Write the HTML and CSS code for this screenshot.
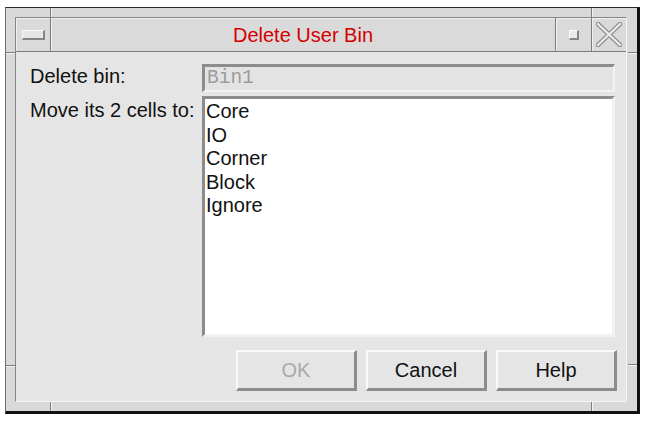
FILE: index.html
```html
<!DOCTYPE html>
<html>
<head>
<meta charset="utf-8">
<link rel="stylesheet" href="styles.css">
</head>
<body>
<div class="win">
  <span class="notch v" style="left:44px;top:0"></span>
  <span class="notch v" style="left:585px;top:0"></span>
  <span class="notch v" style="left:44px;bottom:0"></span>
  <span class="notch v" style="left:585px;bottom:0"></span>
  <span class="notch h" style="left:0;top:44px"></span>
  <span class="notch h" style="right:0;top:44px"></span>
  <span class="notch h" style="left:0;top:357px"></span>
  <span class="notch h" style="right:0;top:356px"></span>
  <div class="inner">
    <div class="titlebar">
      <div class="tb-cell tb-menu"><span class="menu-bar"></span></div>
      <div class="tb-cell tb-title">Delete User Bin</div>
      <div class="tb-cell tb-small"><span class="sq"></span></div>
      <div class="tb-cell tb-close">
        <svg width="26" height="25" viewBox="0 0 26 25">
          <g stroke-linecap="square">
            <line x1="2" y1="2" x2="24" y2="23" stroke="#8c8c8c" stroke-width="4.5"/>
            <line x1="24" y1="2" x2="2" y2="23" stroke="#8c8c8c" stroke-width="4.5"/>
            <line x1="2" y1="2" x2="24" y2="23" stroke="#ececec" stroke-width="2.2"/>
            <line x1="24" y1="2" x2="2" y2="23" stroke="#ececec" stroke-width="2.2"/>
          </g>
        </svg>
      </div>
    </div>
    <div class="content">
      <div class="form">
        <div class="label first">Delete bin:</div>
        <div class="field">Bin1</div>
        <div class="label">Move its 2 cells to:</div>
        <div class="list">
          <div class="item">Core</div>
          <div class="item">IO</div>
          <div class="item">Corner</div>
          <div class="item">Block</div>
          <div class="item">Ignore</div>
        </div>
      </div>
      <div class="buttons">
        <div class="btn disabled">OK</div>
        <div class="btn">Cancel</div>
        <div class="btn">Help</div>
      </div>
    </div>
  </div>
</div>
</body>
</html>
```
FILE: styles.css
```css
html, body {
  margin: 0;
  padding: 0;
  background: #ffffff;
}
body {
  padding: 7px 0 0 5px;
  font-family: "Liberation Sans", Arial, sans-serif;
}
.win {
  position: relative;
  box-sizing: border-box;
  width: 635px;
  height: 407px;
  border-top: 1px solid #2a2a2a;
  border-left: 1px solid #6e6e6e;
  border-right: 3px solid #111111;
  border-bottom: 3px solid #111111;
  background: #d9d9d9;
  padding: 9px 10px 9px 9px;
  display: flex;
}
.notch {
  position: absolute;
  background: #7c7c7c;
}
.notch.v {
  width: 1px;
  height: 9px;
  box-shadow: 1px 0 0 #f4f4f4;
}
.notch.h {
  height: 1px;
  width: 9px;
  box-shadow: 0 1px 0 #f4f4f4;
}
.inner {
  flex: 1;
  display: flex;
  flex-direction: column;
  border-top: 1px solid #858585;
  border-left: 1px solid #858585;
  border-right: 1px solid #f6f6f6;
  border-bottom: 1px solid #f6f6f6;
  background: #e5e5e5;
}
.titlebar {
  display: flex;
  height: 34px;
  background: #dadada;
  border-bottom: 1px solid #7c7c7c;
}
.tb-cell {
  border-right: 1px solid #7c7c7c;
  box-shadow: inset 1px 1px 0 #f0f0f0;
  display: flex;
  align-items: center;
  justify-content: center;
}
.tb-menu { width: 34px; }
.tb-title {
  flex: 1;
  color: #d40000;
  font-size: 20px;
  padding-top: 1px;
}
.tb-small { width: 35px; }
.tb-close { width: 34px; border-right: none; }
.menu-bar {
  display: block;
  box-sizing: border-box;
  width: 23px;
  height: 10px;
  margin-top: 1px;
  background: #e6e6e6;
  border-top: 1px solid #fafafa;
  border-left: 1px solid #fafafa;
  border-right: 2px solid #858585;
  border-bottom: 2px solid #858585;
}
.sq {
  display: block;
  box-sizing: border-box;
  width: 10px;
  height: 10px;
  margin-top: 1px;
  margin-left: 1px;
  background: #eaeaea;
  border-top: 1px solid #fafafa;
  border-left: 1px solid #fafafa;
  border-right: 2px solid #858585;
  border-bottom: 2px solid #858585;
}
.content {
  flex: 1;
  display: flex;
  flex-direction: column;
  padding: 12px 9px 10px 14px;
}
.form {
  display: grid;
  grid-template-columns: 172px 1fr;
  row-gap: 4px;
  margin-right: 2px;
  font-size: 20px;
  color: #111;
}
.label {
  line-height: 24px;
  padding-top: 2px;
  white-space: nowrap;
}
.label.first {
  padding-top: 0;
}
.field {
  box-sizing: border-box;
  height: 28px;
  border-top: 3px solid #8c8c8c;
  border-left: 3px solid #8c8c8c;
  border-right: 2px solid #f2f2f2;
  border-bottom: 2px solid #f2f2f2;
  background: #e3e3e3;
  font-family: "Liberation Mono", "Courier New", monospace;
  font-size: 19.5px;
  line-height: 23px;
  color: #9c9c9c;
  padding-left: 2px;
}
.list {
  box-sizing: border-box;
  height: 241px;
  border-top: 3px solid #8c8c8c;
  border-left: 3px solid #8c8c8c;
  border-right: 3px solid #f2f2f2;
  border-bottom: 3px solid #f2f2f2;
  background: #ffffff;
  padding-left: 1px;
}
.item {
  line-height: 23.5px;
  padding-top: 1px;
  margin-bottom: -1px;
}
.buttons {
  display: flex;
  justify-content: flex-end;
  gap: 9px;
  margin-top: 13px;
}
.btn {
  box-sizing: border-box;
  width: 121px;
  height: 41px;
  border-top: 2px solid #fafafa;
  border-left: 2px solid #fafafa;
  border-right: 3px solid #8c8c8c;
  border-bottom: 3px solid #8c8c8c;
  background: #e5e5e5;
  font-size: 20px;
  color: #111;
  display: flex;
  align-items: center;
  justify-content: center;
}
.btn.disabled {
  color: #a9a9a9;
}
```
